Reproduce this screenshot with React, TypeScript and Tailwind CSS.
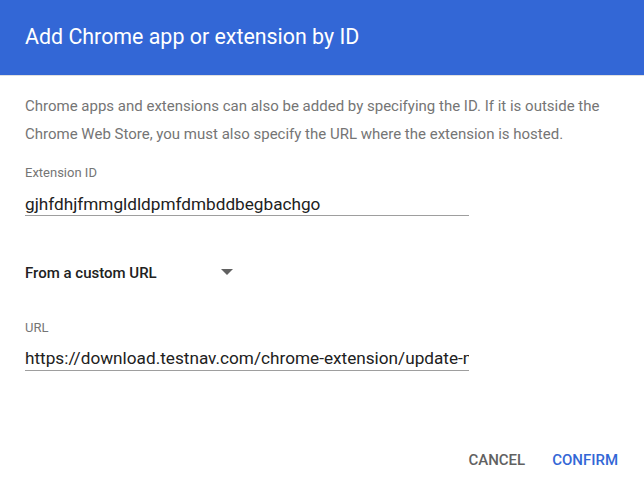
export default function App() {
  return (
    <div className="w-[644px] h-[488px] bg-white flex flex-col" style={{ fontFamily: 'Roboto, "Liberation Sans", sans-serif' }}>
      <div className="h-[75px] bg-[#3367d6] flex items-center px-[25px] shrink-0">
        <h1 className="text-white text-[21.4px] font-normal">Add Chrome app or extension by ID</h1>
      </div>
      <div className="h-px bg-[#e0e0e0]" />

      <div className="flex-1 px-[25px] pt-[16px] flex flex-col">
        <p className="text-[#757575] text-[15px] leading-[28px] whitespace-nowrap">
          Chrome apps and extensions can also be added by specifying the ID. If it is outside the
          <br />
          Chrome Web Store, you must also specify the URL where the extension is hosted.
        </p>

        <div className="mt-[17px] w-[444px]">
          <label className="block text-[#757575] text-[13px] leading-[16px]">Extension ID</label>
          <input
            readOnly
            value="gjhfdhjfmmgldldpmfdmbddbegbachgo"
            className="mt-[12px] block w-full border-b border-[#9e9e9e] pb-[1px] text-[#212121] text-[17.2px] leading-[22px] h-[23px] outline-none bg-transparent"
          />
        </div>

        <div className="mt-[47px] flex items-center h-[20px]">
          <span className="text-[#212121] text-[15px] font-medium w-[196px]">From a custom URL</span>
          <svg width="12" height="6" viewBox="0 0 12 6" className="mt-[-3px]">
            <path d="M0 0 L12 0 L6 6 Z" fill="#616161" />
          </svg>
        </div>

        <div className="mt-[37px] w-[444px]">
          <label className="block text-[#757575] text-[13px] leading-[16px]">URL</label>
          <input
            readOnly
            value="https://download.testnav.com/chrome-extension/update-manifest.xml"
            className="mt-[11px] block w-full border-b border-[#9e9e9e] pb-[1px] text-[#212121] text-[17.2px] leading-[22px] h-[24px] outline-none bg-transparent"
          />
        </div>

        <div className="mt-auto mb-[19px] flex justify-end items-center gap-[27px] pr-[1px]">
          <button className="text-[#616161] text-[15px] font-medium uppercase leading-[18px]">Cancel</button>
          <button className="text-[#3367d6] text-[15px] font-medium uppercase leading-[18px]">Confirm</button>
        </div>
      </div>
    </div>
  )
}
